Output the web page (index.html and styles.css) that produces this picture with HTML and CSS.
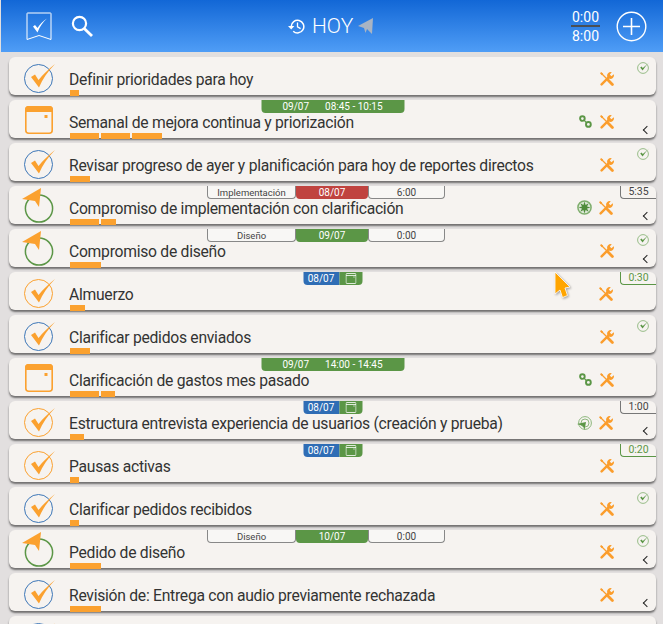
FILE: index.html
```html
<!DOCTYPE html>
<html lang="es">

<head>
    <meta charset="UTF-8" />
    <title>Hoy</title>
    <link rel="stylesheet" href="styles.css">
</head>

<body>
    <svg class="defs" width="0" height="0">
        <symbol id="check-mark" viewBox="0 0 24 24">
            <path d="M0 13 L4 10.5 L7.5 16 C12 10 18 5 24 0 C17 7 11.5 15 8 23.5 Z" fill="#fba12f" />
        </symbol>
        <symbol id="calendar" viewBox="0 0 28 28">
            <rect x=".8" y=".8" width="26.4" height="26.4" rx="3" fill="none" stroke="#fba12f" stroke-width="1.6" />
            <path d="M0 3.5 a3.5 3.5 0 0 1 3.5 -3.5 h21 a3.5 3.5 0 0 1 3.5 3.5 v2.5 h-28 z" fill="#fba12f" />
            <rect x="19.5" y="9" width="3" height="3" fill="#fba12f" />
        </symbol>
        <symbol id="flag" viewBox="0 0 34 36">
            <circle cx="17" cy="20.5" r="13.6" fill="none" stroke="#5b9646" stroke-width="1.5" />
            <path d="M0 11 L19 0 L17 19 L13 13 Z" fill="#fba12f" />
        </symbol>
        <symbol id="wrench" viewBox="0 0 14 14">
            <path d="M1.6 12.4 L8.6 5.4" stroke="#fb9d2c" stroke-width="2.4" stroke-linecap="round" />
            <path d="M7.4 5 A3.6 3.6 0 0 1 11.8 .2 L9.8 2.6 L11.4 4.2 L13.8 2.2 A3.6 3.6 0 0 1 9 6.6 Z" fill="#fb9d2c" />
            <path d="M1.5 1.5 L8 8" stroke="#fb9d2c" stroke-width="1.3" />
            <path d="M8 8 L12.4 12.4" stroke="#fb9d2c" stroke-width="2.8" stroke-linecap="round" />
            <path d="M0 1.2 L1.2 0 L3.2 1.8 L1.8 3.2 Z" fill="#fb9d2c" />
        </symbol>
        <symbol id="done" viewBox="0 0 13 13">
            <circle cx="6" cy="7" r="5.4" fill="none" stroke="#8db77d" stroke-width=".9" />
            <path d="M3.2 6.6 L5.6 9.6 C7.5 6.5 9.5 4 12.6 1.2 L5.8 7 L4.6 5.6 Z" fill="#5b9646" />
        </symbol>
        <symbol id="gears" viewBox="0 0 13 13">
            <circle cx="3.4" cy="3.6" r="2.3" fill="none" stroke="#5b9646" stroke-width="1.9" />
            <circle cx="9.4" cy="9.4" r="2.4" fill="none" stroke="#5b9646" stroke-width="1.9" />
            <path d="M5 5.2 L7.6 7.8" stroke="#5b9646" stroke-width="1.2" />
        </symbol>
        <symbol id="window" viewBox="0 0 11 11">
            <rect x=".5" y=".5" width="10" height="10" rx="1" fill="none" stroke="#fff" stroke-width=".8" />
            <path d="M.5 2.5 H10.5" stroke="#fff" stroke-width=".8" />
            <rect x="8" y="3.5" width="1" height="1" fill="#fff" />
        </symbol>
    </svg>

    <header class="top_bar">
        <svg class="logo" width="26" height="29" viewBox="0 0 26 29">
            <path d="M1 1.5 Q1 1 1.5 1 H24.5 Q25 1 25 1.5 V27.5 L13 23.5 L1 27.5 Z" fill="none" stroke="#fff" stroke-width="1" />
            <path d="M7 14.5 L11.5 20.5 C14 14 17 10 21 6.5 C17 9 14 12 11.5 16 L9 13 Z" fill="#fff" />
        </svg>
        <svg class="search" width="22" height="22" viewBox="0 0 22 22">
            <circle cx="8.5" cy="8.5" r="6.6" fill="none" stroke="#fff" stroke-width="2.2" />
            <path d="M13.2 13.4 L21 21" stroke="#fff" stroke-width="2.8" />
        </svg>
        <div class="title_box">
            <svg width="18" height="15" viewBox="0 0 18 15">
                <path d="M3.2 7.5 A6.3 6.3 0 1 1 5.2 12.2" fill="none" stroke="#fff" stroke-width="1.5" />
                <path d="M0 7 H6.4 L3.2 10.6 Z" fill="#fff" />
                <path d="M9.5 3.6 V7.8 L12.6 9.6" fill="none" stroke="#fff" stroke-width="1.3" />
            </svg>
            <span class="title">HOY</span>
            <svg class="plane" width="15" height="16" viewBox="0 0 15 16">
                <path d="M0 8 L15 0 L14 16 L9 11 L7.5 15 L6 10 Z" fill="#a9b4c3" />
            </svg>
        </div>
        <div class="hours">
            <span>0:00</span>
            <span class="hours_line">8:00</span>
        </div>
        <svg class="add" width="31" height="31" viewBox="0 0 31 31">
            <circle cx="15.5" cy="15.5" r="14.3" fill="none" stroke="#fff" stroke-width="1.4" />
            <path d="M15.5 7 V24 M7 15.5 H24" stroke="#fff" stroke-width="1.6" />
        </svg>
    </header>

    <main class="list">
        <div class="card">
            <div class="state state_blue"><svg class="mark"><use href="#check-mark" /></svg></div>
            <div class="body">
                <div class="name">Definir prioridades para hoy</div>
                <div class="bars"><i style="width:9px"></i></div>
            </div>
            <svg class="tool"><use href="#wrench" /></svg>
            <svg class="done"><use href="#done" /></svg>
        </div>

        <div class="card">
            <div class="state"><svg class="cal"><use href="#calendar" /></svg></div>
            <div class="body">
                <div class="name">Semanal de mejora continua y priorización</div>
                <div class="bars"><i style="width:29px"></i><i style="width:29px"></i><i style="width:30px"></i></div>
            </div>
            <svg class="link"><use href="#gears" /></svg>
            <svg class="tool"><use href="#wrench" /></svg>
            <span class="back"></span>
            <div class="tabs"><span class="tab tab_green tab_wide"><span>09/07</span><span>08:45 - 10:15</span></span></div>
        </div>

        <div class="card">
            <div class="state state_blue"><svg class="mark"><use href="#check-mark" /></svg></div>
            <div class="body">
                <div class="name">Revisar progreso de ayer y planificación para hoy de reportes directos</div>
                <div class="bars"><i style="width:20px"></i></div>
            </div>
            <svg class="tool"><use href="#wrench" /></svg>
            <svg class="done"><use href="#done" /></svg>
        </div>

        <div class="card">
            <div class="state"><svg class="flag"><use href="#flag" /></svg></div>
            <div class="body">
                <div class="name">Compromiso de implementación con clarificación</div>
                <div class="bars"><i style="width:29px"></i><i style="width:15px"></i></div>
            </div>
            <svg class="link compass" viewBox="0 0 15 15">
                <circle cx="7.5" cy="7.5" r="6.6" fill="#dbe7d5" stroke="#7fae6d" stroke-width="1.5" />
                <path d="M7.5 1.5 L8.6 5 L11.7 3.3 L10 6.4 L13.5 7.5 L10 8.6 L11.7 11.7 L8.6 10 L7.5 13.5 L6.4 10 L3.3 11.7 L5 8.6 L1.5 7.5 L5 6.4 L3.3 3.3 L6.4 5 Z" fill="#4f8c3b" />
            </svg>
            <svg class="tool tool_left"><use href="#wrench" /></svg>
            <span class="back"></span>
            <div class="tabs tabs_three">
                <span class="tab tab_outline tab_label">Implementación</span>
                <span class="tab tab_red tab_date">08/07</span>
                <span class="tab tab_outline tab_time">6:00</span>
            </div>
            <span class="timer">5:35</span>
        </div>

        <div class="card">
            <div class="state"><svg class="flag"><use href="#flag" /></svg></div>
            <div class="body">
                <div class="name">Compromiso de diseño</div>
                <div class="bars"><i style="width:31px"></i></div>
            </div>
            <svg class="tool"><use href="#wrench" /></svg>
            <svg class="done"><use href="#done" /></svg>
            <span class="back"></span>
            <div class="tabs tabs_three">
                <span class="tab tab_outline tab_label">Diseño</span>
                <span class="tab tab_green tab_date">09/07</span>
                <span class="tab tab_outline tab_time">0:00</span>
            </div>
        </div>

        <div class="card">
            <div class="state state_orange"><svg class="mark"><use href="#check-mark" /></svg></div>
            <div class="body">
                <div class="name">Almuerzo</div>
                <div class="bars"><i style="width:15px"></i></div>
            </div>
            <svg class="tool tool_left"><use href="#wrench" /></svg>
            <div class="tabs">
                <span class="tab tab_blue">08/07</span><span class="tab tab_green tab_icon"><svg><use href="#window" /></svg></span>
            </div>
            <span class="timer timer_green">0:30</span>
        </div>

        <div class="card">
            <div class="state state_blue"><svg class="mark"><use href="#check-mark" /></svg></div>
            <div class="body">
                <div class="name">Clarificar pedidos enviados</div>
                <div class="bars"><i style="width:20px"></i></div>
            </div>
            <svg class="tool"><use href="#wrench" /></svg>
            <svg class="done"><use href="#done" /></svg>
        </div>

        <div class="card">
            <div class="state"><svg class="cal"><use href="#calendar" /></svg></div>
            <div class="body">
                <div class="name">Clarificación de gastos mes pasado</div>
                <div class="bars"><i style="width:29px"></i><i style="width:14px"></i></div>
            </div>
            <svg class="link"><use href="#gears" /></svg>
            <svg class="tool"><use href="#wrench" /></svg>
            <div class="tabs"><span class="tab tab_green tab_wide"><span>09/07</span><span>14:00 - 14:45</span></span></div>
        </div>

        <div class="card">
            <div class="state state_orange"><svg class="mark"><use href="#check-mark" /></svg></div>
            <div class="body">
                <div class="name">Estructura entrevista experiencia de usuarios (creación y prueba)</div>
                <div class="bars"><i style="width:14px"></i></div>
            </div>
            <svg class="link radar" viewBox="0 0 15 15">
                <circle cx="8" cy="7" r="6.4" fill="none" stroke="#8db77d" stroke-width="1" />
                <circle cx="8" cy="7" r="4" fill="none" stroke="#8db77d" stroke-width="1" />
                <path d="M0 8 L9 6 L7.5 14 L6 10 Z" fill="#5b9646" />
            </svg>
            <svg class="tool tool_left"><use href="#wrench" /></svg>
            <span class="back"></span>
            <div class="tabs">
                <span class="tab tab_blue">08/07</span><span class="tab tab_green tab_icon"><svg><use href="#window" /></svg></span>
            </div>
            <span class="timer">1:00</span>
        </div>

        <div class="card">
            <div class="state state_orange"><svg class="mark"><use href="#check-mark" /></svg></div>
            <div class="body">
                <div class="name">Pausas activas</div>
                <div class="bars"><i style="width:9px"></i></div>
            </div>
            <svg class="tool"><use href="#wrench" /></svg>
            <div class="tabs">
                <span class="tab tab_blue">08/07</span><span class="tab tab_green tab_icon"><svg><use href="#window" /></svg></span>
            </div>
            <span class="timer timer_green">0:20</span>
        </div>

        <div class="card">
            <div class="state state_blue"><svg class="mark"><use href="#check-mark" /></svg></div>
            <div class="body">
                <div class="name">Clarificar pedidos recibidos</div>
                <div class="bars"><i style="width:9px"></i></div>
            </div>
            <svg class="tool"><use href="#wrench" /></svg>
            <svg class="done"><use href="#done" /></svg>
        </div>

        <div class="card">
            <div class="state"><svg class="flag"><use href="#flag" /></svg></div>
            <div class="body">
                <div class="name">Pedido de diseño</div>
                <div class="bars"><i style="width:31px"></i></div>
            </div>
            <svg class="tool"><use href="#wrench" /></svg>
            <svg class="done"><use href="#done" /></svg>
            <span class="back"></span>
            <div class="tabs tabs_three">
                <span class="tab tab_outline tab_label">Diseño</span>
                <span class="tab tab_green tab_date">10/07</span>
                <span class="tab tab_outline tab_time">0:00</span>
            </div>
        </div>

        <div class="card">
            <div class="state state_blue"><svg class="mark"><use href="#check-mark" /></svg></div>
            <div class="body">
                <div class="name">Revisión de: Entrega con audio previamente rechazada</div>
                <div class="bars"><i style="width:31px"></i></div>
            </div>
            <svg class="tool"><use href="#wrench" /></svg>
            <span class="back"></span>
        </div>

        <div class="card">
            <div class="state state_blue"><svg class="mark"><use href="#check-mark" /></svg></div>
        </div>
    </main>

    <svg class="cursor" width="20" height="29" viewBox="0 0 20 29">
        <path d="M2 1 L17 16 L12 17 L14.5 24.5 L9.5 26.5 L7 19 L2 23 Z" fill="#ffa500" stroke="#fff" stroke-width=".8" />
    </svg>
</body>

</html>
```

FILE: styles.css
```css
html,
body {
    height: 624px;
    overflow: hidden;
}

body {
    margin: 0;
    position: relative;
    font-family: Roboto, sans-serif;
    background-color: #e2dfdf;
    color: #333;
}

.defs {
    position: absolute;
}

/* top bar */
.top_bar {
    position: relative;
    display: flex;
    align-items: center;
    height: 52px;
    margin-left: 1px;
    padding-left: 25px;
    background: linear-gradient(#1267d6, #4f9df6);
    color: #fff;
}

.search {
    margin-left: 19px;
}

.title_box {
    position: absolute;
    left: 287px;
    top: 14px;
    display: flex;
    align-items: center;
    gap: 6px;
}

.title {
    font-size: 21px;
    font-weight: 300;
    line-height: 24px;
}

.plane {
    margin-left: -1px;
}

.hours {
    margin-left: auto;
    width: 29px;
    display: flex;
    flex-direction: column;
    align-items: center;
    font-size: 14px;
    line-height: 12px;
}

.hours_line {
    border-top: 2px solid #4a4f55;
    margin-top: 2px;
    padding-top: 3px;
    width: 100%;
    text-align: center;
}

.add {
    margin: 0 16px;
}

/* task list */
.list {
    display: flex;
    flex-direction: column;
    gap: 5px;
    padding: 5px 7px 0 9px;
}

.card {
    position: relative;
    flex: none;
    display: flex;
    align-items: flex-start;
    height: 38px;
    border-radius: 6px;
    background-color: #f6f3f0;
    box-shadow: 0 2px 2px rgba(0, 0, 0, 0.5);
}

.state {
    position: relative;
    flex: none;
    width: 60px;
    height: 38px;
}

.state::before {
    content: "";
    display: none;
    position: absolute;
    left: 15px;
    top: 7px;
    box-sizing: border-box;
    width: 29px;
    height: 29px;
    border-radius: 50%;
    border: 1.6px solid;
}

.state_blue::before {
    display: block;
    border-color: #3d77b8;
}

.state_orange::before {
    display: block;
    border-color: #fba12f;
}

.mark {
    position: absolute;
    left: 22px;
    top: 7px;
    width: 24px;
    height: 24px;
}

.cal {
    position: absolute;
    left: 16px;
    top: 6px;
    width: 28px;
    height: 28px;
}

.flag {
    position: absolute;
    left: 13px;
    top: 2px;
    width: 34px;
    height: 36px;
}

.body {
    flex: 1;
    display: flex;
    flex-direction: column;
    justify-content: space-between;
    height: 38px;
    padding-top: 13px;
    box-sizing: border-box;
}

.name {
    font-size: 15.7px;
    letter-spacing: -0.27px;
    line-height: 20px;
}

.bars {
    display: flex;
    gap: 2px;
    margin-left: 1px;
}

.bars i {
    display: block;
    height: 6px;
    background-color: #fba12f;
}

.tool {
    flex: none;
    width: 14px;
    height: 14px;
    margin: 15px 42px 0 0;
}

.tool_left {
    margin-right: 43px;
}

.link {
    flex: none;
    width: 13px;
    height: 13px;
    margin: 15px 8px 0 0;
}

.compass,
.radar {
    width: 15px;
    height: 15px;
    margin-right: 7px;
}

.compass {
    margin-top: 14px;
}

.done {
    position: absolute;
    right: 6px;
    top: 4px;
    width: 13px;
    height: 13px;
}

.back {
    position: absolute;
    right: 6px;
    bottom: 5px;
    box-sizing: border-box;
    width: 6px;
    height: 6px;
    border-left: 1.2px solid #222;
    border-bottom: 1.2px solid #222;
    transform: rotate(45deg);
}

/* tabs hanging from the top edge of a card */
.tabs {
    position: absolute;
    top: 0;
    left: 50%;
    display: flex;
    transform: translateX(-50%);
}

.tabs_three {
    margin-left: -6.5px;
}

.tab {
    display: flex;
    align-items: center;
    justify-content: center;
    box-sizing: border-box;
    height: 13px;
    font-size: 10px;
    color: #fff;
}

.tab_green {
    background-color: #5b9646;
}

.tab_red {
    background-color: #c0433f;
}

.tab_blue {
    width: 36px;
    background-color: #2f6db5;
    border-bottom-left-radius: 4px;
}

.tab_wide {
    width: 143px;
    gap: 16px;
    border-radius: 0 0 4px 4px;
}

.tab_icon {
    width: 23px;
    border-bottom-right-radius: 4px;
}

.tab_icon svg {
    width: 11px;
    height: 11px;
}

.tab_date {
    width: 72px;
    border-radius: 0 0 4px 4px;
}

.tab_outline {
    border: 1px solid #888;
    border-top: 0;
    color: #444;
    background-color: #f8f7f5;
    border-radius: 0 0 4px 4px;
}

.tab_label {
    width: 89px;
    font-size: 9.5px;
}

.tab_time {
    width: 77px;
}

.timer {
    position: absolute;
    right: 0;
    top: 0;
    width: 36px;
    height: 13px;
    box-sizing: border-box;
    border-left: 1px solid #777;
    border-bottom: 1px solid #777;
    border-bottom-left-radius: 4px;
    text-align: center;
    font-size: 10.5px;
    line-height: 12px;
    color: #444;
}

.timer_green {
    border-color: #5b9646;
    color: #5b9646;
}

/* mouse pointer */
.cursor {
    position: absolute;
    left: 553px;
    top: 271px;
    filter: drop-shadow(1px 1px 1px rgba(0, 0, 0, 0.35));
}
```
